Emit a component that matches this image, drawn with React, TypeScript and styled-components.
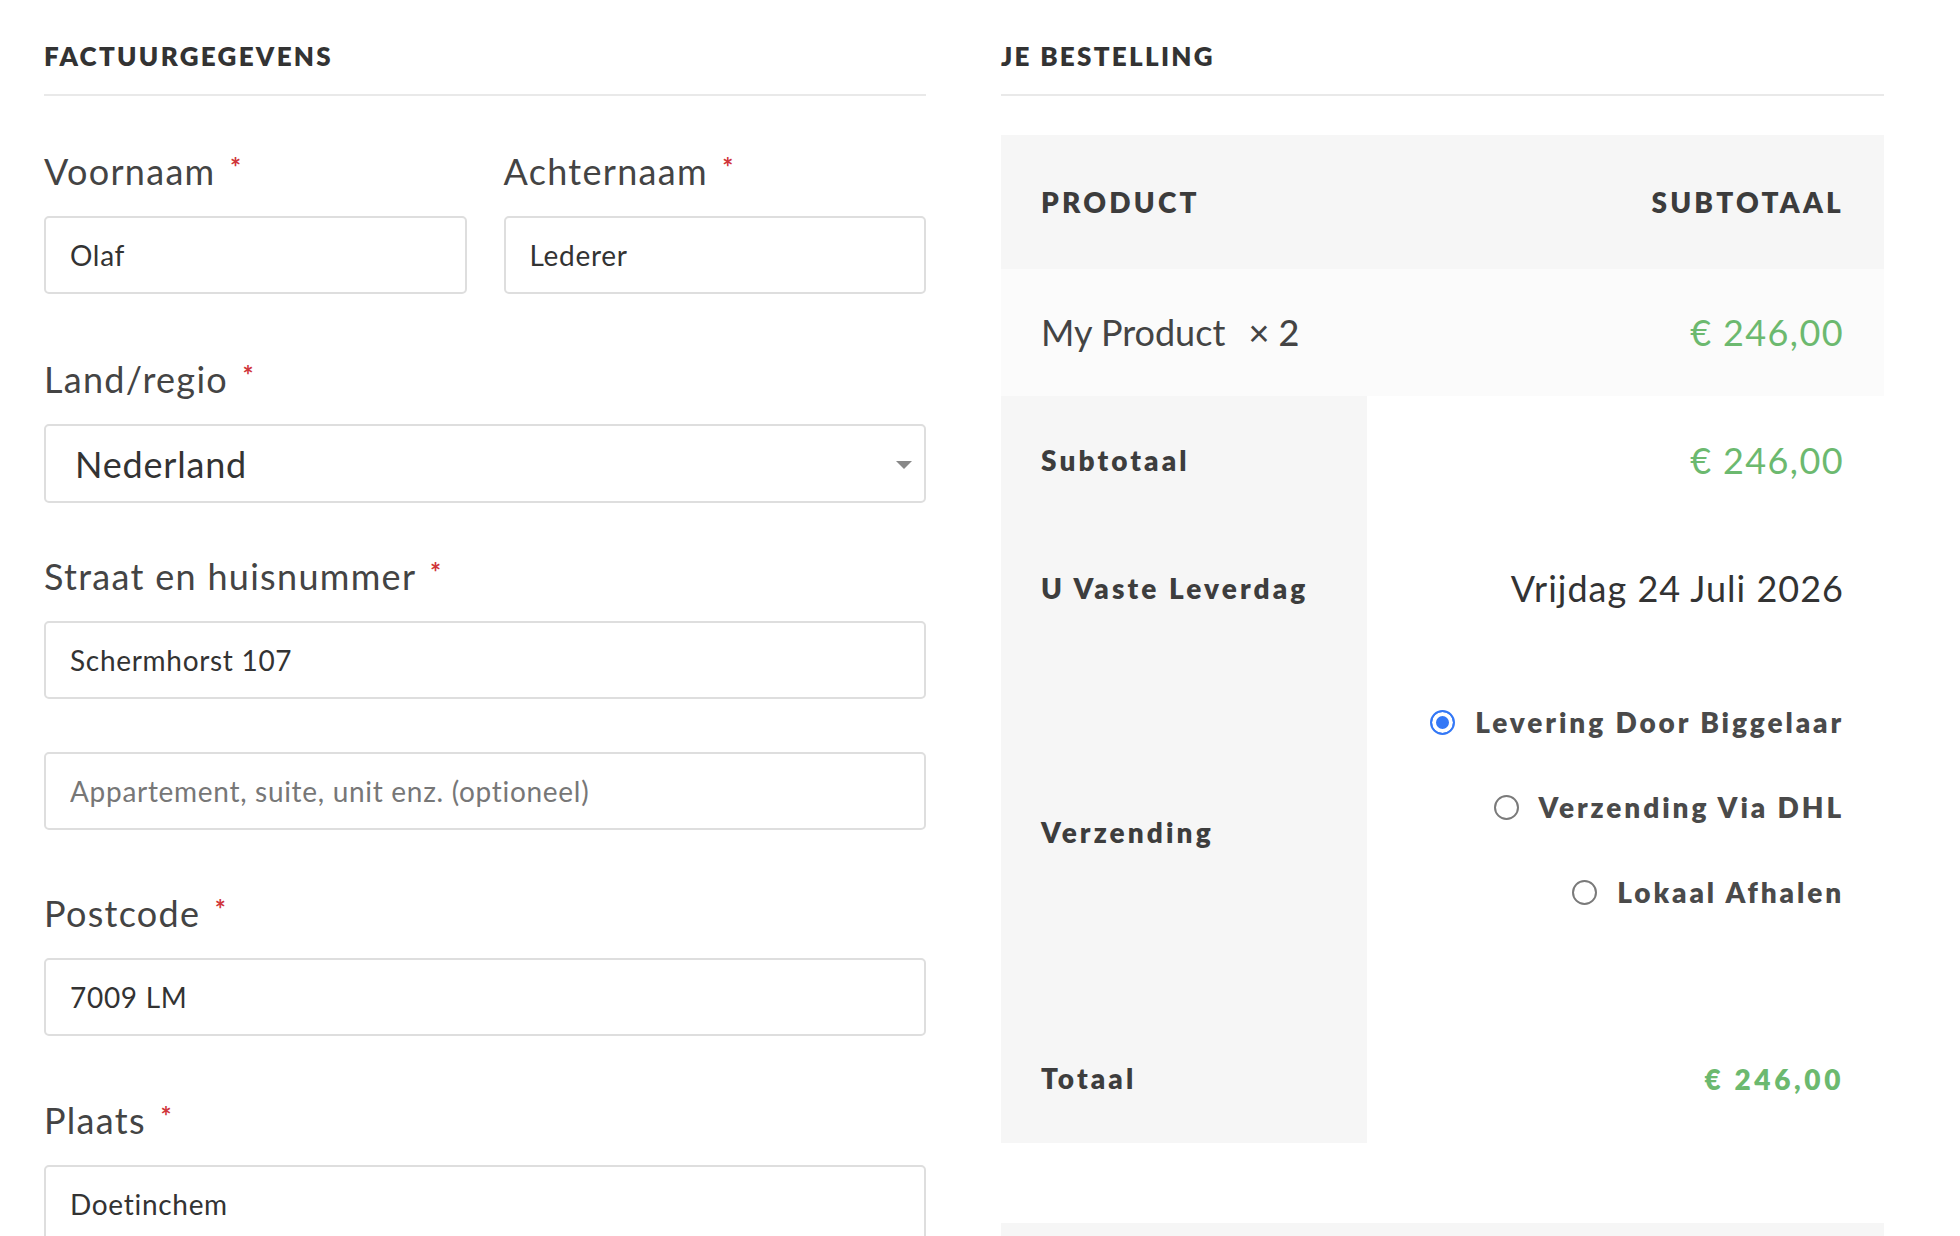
import React from "react";
import styled, { createGlobalStyle } from "styled-components";

const GlobalStyle = createGlobalStyle`
  * { box-sizing: border-box; }
  html, body {
    margin: 0;
    background: #fff;
    overflow: hidden;
  }
  body {
    font-family: Lato, "Open Sans", sans-serif;
    color: #444;
  }
`;

const Page = styled.div`
  display: grid;
  grid-template-columns: 882px 883px;
  column-gap: 75px;
  align-items: start;
  padding: 37px 76px 0 44px;
  width: 1960px;
  height: 1236px;
  overflow: hidden;
`;

const Column = styled.section`
  display: flex;
  flex-direction: column;
`;

const SectionTitle = styled.h3`
  margin: 0;
  padding-bottom: 18px;
  border-bottom: 2px solid #e9e9e9;
  font-size: 26px;
  line-height: 39px;
  font-weight: 800;
  letter-spacing: 2.3px;
  text-transform: uppercase;
  color: #333;
`;

const Form = styled.div`
  margin-top: 48px;
`;

const Pair = styled.div`
  display: grid;
  grid-template-columns: 1fr 1fr;
  column-gap: 37px;
`;

const Field = styled.div<{ $space?: number }>`
  display: flex;
  flex-direction: column;
  margin-bottom: ${(p) => p.$space ?? 57}px;
`;

const Label = styled.label`
  display: block;
  margin-bottom: 18px;
  font-size: 36px;
  line-height: 54px;
  letter-spacing: 1.3px;
  color: #444;
`;

const Required = styled.span`
  margin-left: 4px;
  font-size: 26px;
  font-weight: 700;
  line-height: 0;
  vertical-align: 8px;
  color: #d0353a;
`;

const TextInput = styled.input`
  width: 100%;
  height: 78px;
  padding: 0 24px;
  border: 2px solid #dedede;
  border-radius: 5px;
  background: #fff;
  font-family: inherit;
  font-size: 28px;
  letter-spacing: 0.7px;
  color: #333;
  outline: none;

  &::placeholder {
    color: #777;
  }
`;

const SelectBox = styled.div`
  display: flex;
  align-items: center;
  justify-content: space-between;
  height: 79px;
  padding: 0 12px 0 29px;
  border: 2px solid #dedede;
  border-radius: 5px;
  font-size: 36px;
  letter-spacing: 0.8px;
  color: #333;
`;

const Caret = styled.span`
  width: 0;
  height: 0;
  margin-top: 2px;
  border-left: 8px solid transparent;
  border-right: 8px solid transparent;
  border-top: 8px solid #888;
`;

const Table = styled.table`
  width: 100%;
  margin-top: 39px;
  border-collapse: collapse;
`;

const HeadCell = styled.th<{ $right?: boolean }>`
  padding: 46px 40px;
  background: #f6f6f6;
  font-size: 28px;
  line-height: 42px;
  font-weight: 800;
  letter-spacing: 3.2px;
  text-transform: uppercase;
  text-align: ${(p) => (p.$right ? "right" : "left")};
  color: #3c3c3c;
`;

const ItemCell = styled.td<{ $right?: boolean }>`
  padding: 36px 40px 37px;
  background: #fbfbfb;
  font-size: 36px;
  line-height: 54px;
  text-align: ${(p) => (p.$right ? "right" : "left")};
  color: #444;
`;

const Qty = styled.strong`
  margin-left: 14px;
  font-weight: 500;
`;

const TotalLabel = styled.th`
  width: 366px;
  padding: 36px 40px;
  background: #f6f6f6;
  font-size: 28px;
  line-height: 56px;
  font-weight: 800;
  letter-spacing: 3.1px;
  text-align: left;
  vertical-align: middle;
  color: #3d3d3d;
`;

const TotalValue = styled.td`
  padding: 36px 40px;
  font-size: 36px;
  line-height: 56px;
  letter-spacing: 1px;
  text-align: right;
  vertical-align: top;
  color: #333;
`;

const Money = styled.span<{ $strong?: boolean }>`
  color: #6cb96f;
  font-size: ${(p) => (p.$strong ? "28px" : "36px")};
  font-weight: ${(p) => (p.$strong ? 800 : 400)};
  letter-spacing: ${(p) => (p.$strong ? "3.6px" : "1.4px")};
`;

const ShippingList = styled.ul`
  margin: 0;
  padding: 6px 0 27px;
  list-style: none;
`;

const ShippingOption = styled.li`
  display: flex;
  align-items: center;
  justify-content: flex-end;
  gap: 20px;
  height: 56px;
  margin-bottom: 29px;
  font-size: 28px;
  font-weight: 800;
  letter-spacing: 2.9px;
  color: #4a4a4a;
`;

const Radio = styled.span<{ $checked?: boolean }>`
  flex: none;
  width: 25px;
  height: 25px;
  border-radius: 50%;
  border: 2px solid ${(p) => (p.$checked ? "#3478f6" : "#7a7a7a")};
  background: ${(p) => (p.$checked ? "#3478f6" : "#fff")};
  box-shadow: ${(p) => (p.$checked ? "inset 0 0 0 4px #fff" : "none")};
`;

const PaymentBox = styled.div`
  height: 200px;
  margin-top: 80px;
  background: #f6f6f6;
`;

const shipping = [
  { name: "Levering Door Biggelaar", checked: true },
  { name: "Verzending Via DHL", checked: false },
  { name: "Lokaal Afhalen", checked: false },
];

const Star = () => <Required>*</Required>;

const App = () => {
  return (
    <>
      <GlobalStyle />
      <Page>
        <Column>
          <SectionTitle>Factuurgegevens</SectionTitle>
          <Form>
            <Pair>
              <Field $space={58}>
                <Label>
                  Voornaam <Star />
                </Label>
                <TextInput defaultValue="Olaf" />
              </Field>
              <Field $space={58}>
                <Label>
                  Achternaam <Star />
                </Label>
                <TextInput defaultValue="Lederer" />
              </Field>
            </Pair>
            <Field $space={46}>
              <Label>
                Land/regio <Star />
              </Label>
              <SelectBox>
                <span>Nederland</span>
                <Caret />
              </SelectBox>
            </Field>
            <Field $space={53}>
              <Label>
                Straat en huisnummer <Star />
              </Label>
              <TextInput defaultValue="Schermhorst 107" />
            </Field>
            <Field $space={56}>
              <TextInput placeholder="Appartement, suite, unit enz. (optioneel)" />
            </Field>
            <Field $space={57}>
              <Label>
                Postcode <Star />
              </Label>
              <TextInput defaultValue="7009 LM" />
            </Field>
            <Field>
              <Label>
                Plaats <Star />
              </Label>
              <TextInput defaultValue="Doetinchem" />
            </Field>
          </Form>
        </Column>

        <Column>
          <SectionTitle>Je bestelling</SectionTitle>
          <Table>
            <thead>
              <tr>
                <HeadCell>Product</HeadCell>
                <HeadCell $right>Subtotaal</HeadCell>
              </tr>
            </thead>
            <tbody>
              <tr>
                <ItemCell>
                  My Product <Qty>×&nbsp;2</Qty>
                </ItemCell>
                <ItemCell $right>
                  <Money>€ 246,00</Money>
                </ItemCell>
              </tr>
            </tbody>
            <tfoot>
              <tr>
                <TotalLabel>Subtotaal</TotalLabel>
                <TotalValue>
                  <Money>€ 246,00</Money>
                </TotalValue>
              </tr>
              <tr>
                <TotalLabel>U Vaste Leverdag</TotalLabel>
                <TotalValue>Vrijdag 24 Juli 2026</TotalValue>
              </tr>
              <tr>
                <TotalLabel>Verzending</TotalLabel>
                <TotalValue>
                  <ShippingList>
                    {shipping.map((s) => (
                      <ShippingOption key={s.name}>
                        <Radio $checked={s.checked} />
                        {s.name}
                      </ShippingOption>
                    ))}
                  </ShippingList>
                </TotalValue>
              </tr>
              <tr>
                <TotalLabel>Totaal</TotalLabel>
                <TotalValue>
                  <Money $strong>€ 246,00</Money>
                </TotalValue>
              </tr>
            </tfoot>
          </Table>
          <PaymentBox />
        </Column>
      </Page>
    </>
  );
};

export default App;
